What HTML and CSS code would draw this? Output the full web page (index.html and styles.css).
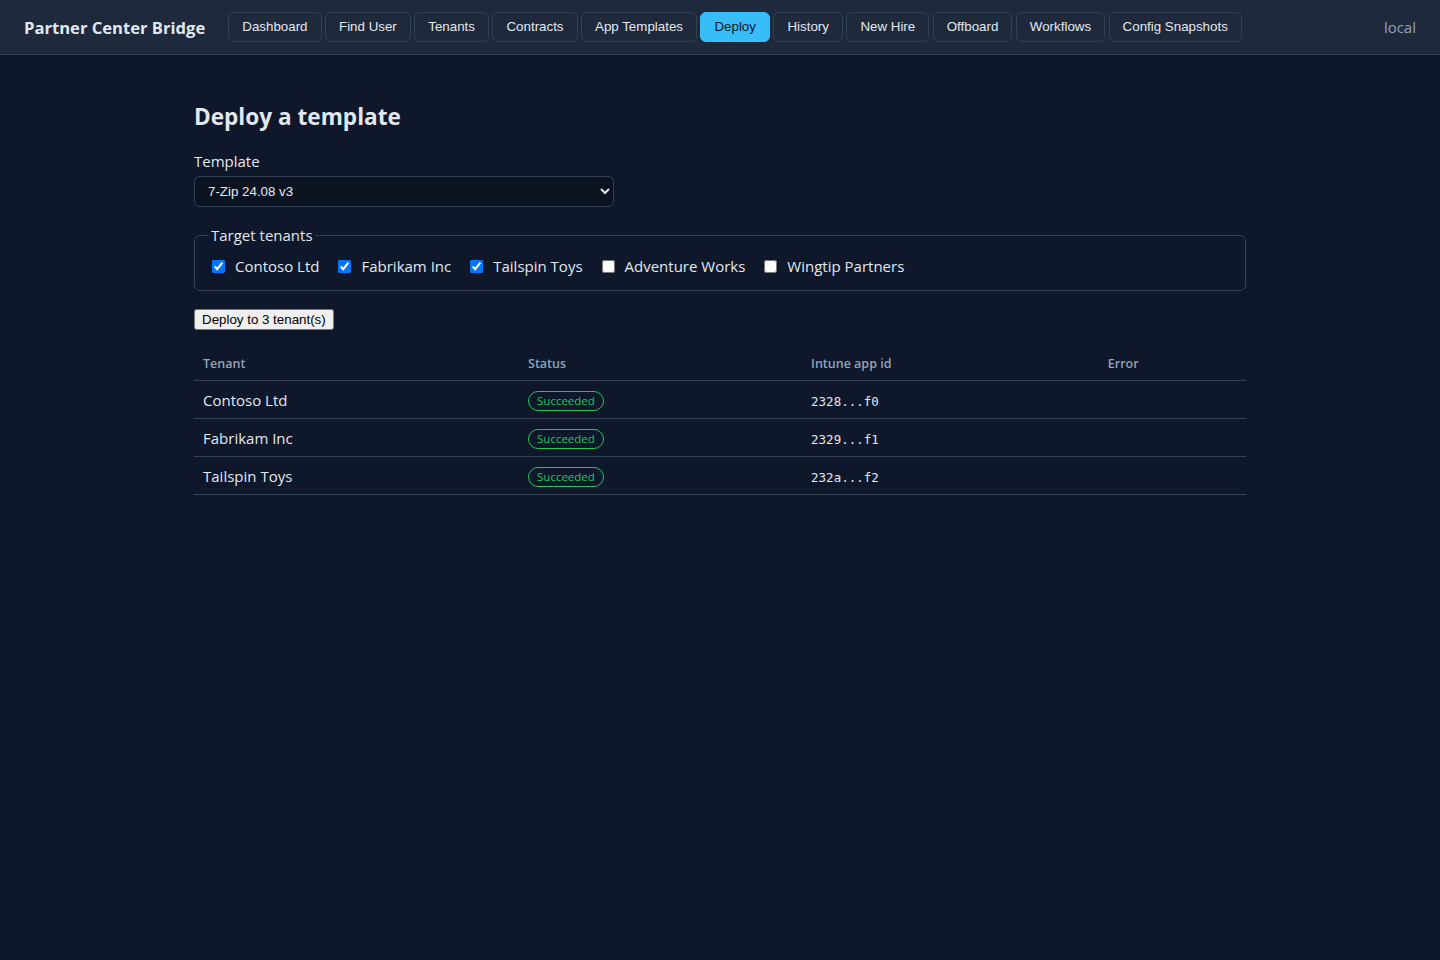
FILE: index.html
```html
<!DOCTYPE html>
<html>
<head>
    <title>Partner Center Bridge</title>
    <link rel="stylesheet" href="styles.css">
</head>
<body>
    <header class="topbar">
        <div class="brand">Partner Center Bridge</div>
        <nav class="nav">
            <button>Dashboard</button>
            <button>Find User</button>
            <button>Tenants</button>
            <button>Contracts</button>
            <button>App Templates</button>
            <button class="active">Deploy</button>
            <button>History</button>
            <button>New Hire</button>
            <button>Offboard</button>
            <button>Workflows</button>
            <button>Config Snapshots</button>
        </nav>
        <div class="env">local</div>
    </header>

    <main class="page">
        <h1>Deploy a template</h1>

        <label class="field-label" for="template">Template</label>
        <select id="template" class="select">
            <option>7-Zip 24.08 v3</option>
        </select>

        <fieldset class="tenants">
            <legend>Target tenants</legend>
            <label class="check"><input type="checkbox" checked> Contoso Ltd</label>
            <label class="check"><input type="checkbox" checked> Fabrikam Inc</label>
            <label class="check"><input type="checkbox" checked> Tailspin Toys</label>
            <label class="check"><input type="checkbox"> Adventure Works</label>
            <label class="check"><input type="checkbox"> Wingtip Partners</label>
        </fieldset>

        <button class="deploy-btn">Deploy to 3 tenant(s)</button>

        <table class="results">
            <thead>
                <tr>
                    <th>Tenant</th>
                    <th>Status</th>
                    <th>Intune app id</th>
                    <th>Error</th>
                </tr>
            </thead>
            <tbody>
                <tr>
                    <td>Contoso Ltd</td>
                    <td><span class="badge ok">Succeeded</span></td>
                    <td><code>2328...f0</code></td>
                    <td></td>
                </tr>
                <tr>
                    <td>Fabrikam Inc</td>
                    <td><span class="badge ok">Succeeded</span></td>
                    <td><code>2329...f1</code></td>
                    <td></td>
                </tr>
                <tr>
                    <td>Tailspin Toys</td>
                    <td><span class="badge ok">Succeeded</span></td>
                    <td><code>232a...f2</code></td>
                    <td></td>
                </tr>
            </tbody>
        </table>
    </main>
</body>
</html>
```

FILE: styles.css
```css
body {
    margin: 0;
    background-color: #0f172a;
    color: #e2e8f0;
    font-family: "Open Sans", "Noto Sans", sans-serif;
    font-size: 15px;
}

/* top bar */
.topbar {
    display: flex;
    align-items: center;
    height: 55px;
    padding: 0 24px;
    background-color: #1e293b;
    border-bottom: 1px solid #334155;
    box-sizing: border-box;
}
.brand {
    font-weight: 700;
    font-size: 16.6px;
    color: #e2e8f0;
    margin-right: 23px;
    white-space: nowrap;
}
.nav {
    display: flex;
    gap: 3.5px;
    flex: 1;
}
.nav button {
    font-family: "Liberation Sans", Arial, sans-serif;
    font-size: 13.33px;
    background-color: #1e293b;
    color: #e2e8f0;
    border: 1px solid #334155;
    border-radius: 6px;
    padding: 5px 13px 7px;
    height: 30px;
    cursor: pointer;
}
.nav button.active {
    background-color: #38bdf8;
    border-color: #38bdf8;
    color: #0f172a;
}
.env {
    color: #94a3b8;
    font-size: 15px;
}

/* page */
.page {
    max-width: 1052px;
    margin: 0 auto;
    padding: 24px 0;
}
h1 {
    font-size: 22.6px;
    font-weight: 700;
    margin: 22px 0 19px;
}
.field-label {
    display: block;
    margin-bottom: 5px;
}
.select {
    width: 420px;
    height: 31px;
    padding: 0 9px;
    background-color: #0b1220;
    color: #e2e8f0;
    border: 1px solid #334155;
    border-radius: 6px;
    font-family: "Liberation Sans", Arial, sans-serif;
    font-size: 13.33px;
}

.tenants {
    margin: 18px 0 17px;
    padding: 11px 14px 14px;
    border: 1px solid #334155;
    border-radius: 6px;
    display: flex;
    gap: 16px;
}
.tenants legend {
    padding: 0 2px;
    font-size: 15px;
}
.check {
    display: flex;
    align-items: center;
    gap: 8px;
}
.check input {
    margin: 0 2px 0 3px;
    width: 13px;
    height: 13px;
}

.deploy-btn {
    font-family: "Liberation Sans", Arial, sans-serif;
    font-size: 13.33px;
    padding: 1px 6px;
}

/* results table */
.results {
    width: 100%;
    border-collapse: collapse;
    margin-top: 17px;
}
.results th {
    text-align: left;
    font-size: 12.5px;
    font-weight: 600;
    color: #94a3b8;
    padding: 8px 9px;
    border-bottom: 1px solid #334155;
}
.results td {
    padding: 7px 9px;
    height: 23px;
    border-bottom: 1px solid #334155;
}
code {
    font-family: "DejaVu Sans Mono", monospace;
    font-size: 12.5px;
}
.badge {
    display: inline-block;
    font-size: 11.5px;
    padding: 0 8px;
    border-radius: 999px;
    line-height: 18px;
}
.badge.ok {
    color: #22c55e;
    border: 1px solid #22c55e;
}
```
